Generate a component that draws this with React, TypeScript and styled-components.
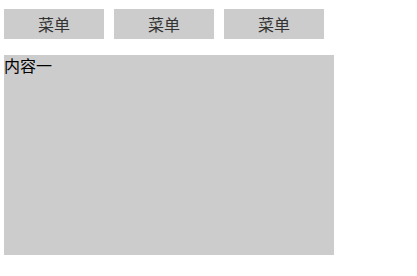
import React, { useState } from "react";
import styled, { createGlobalStyle } from "styled-components";

const GlobalStyle = createGlobalStyle`
  body {
    margin: 0;
    background: #fff;
    font-family: "Noto Sans CJK SC", "Liberation Sans", sans-serif;
    font-size: 16px;
  }
`;

// 전체 탭 영역
const Wrapper = styled.div`
  display: flex;
  flex-direction: column;
  align-items: flex-start;
  padding: 9px 4px;
`;

// 메뉴 줄
const MenuRow = styled.div`
  display: flex;
  gap: 10px;
  margin-bottom: 16px;
`;

// 메뉴 버튼
const MenuButton = styled.div<{ $active?: boolean }>`
  width: 100px;
  height: 30px;
  line-height: 30px;
  text-align: center;
  background-color: #cccccc;
  color: #333333;
  cursor: pointer;
`;

// 내용 영역
const Content = styled.div`
  width: 330px;
  height: 200px;
  background-color: #cccccc;
  color: #000000;
  line-height: 20px;
`;

const menus = ["菜单", "菜单", "菜单"];
const contents = ["内容一", "内容二", "内容三"];

function App() {
  const [index, setIndex] = useState(0);

  return (
    <>
      <GlobalStyle />
      <Wrapper>
        <MenuRow>
          {menus.map((menu, i) => (
            <MenuButton key={i} $active={i === index} onClick={() => setIndex(i)}>
              {menu}
            </MenuButton>
          ))}
        </MenuRow>
        <Content>{contents[index]}</Content>
      </Wrapper>
    </>
  );
}

export default App;
